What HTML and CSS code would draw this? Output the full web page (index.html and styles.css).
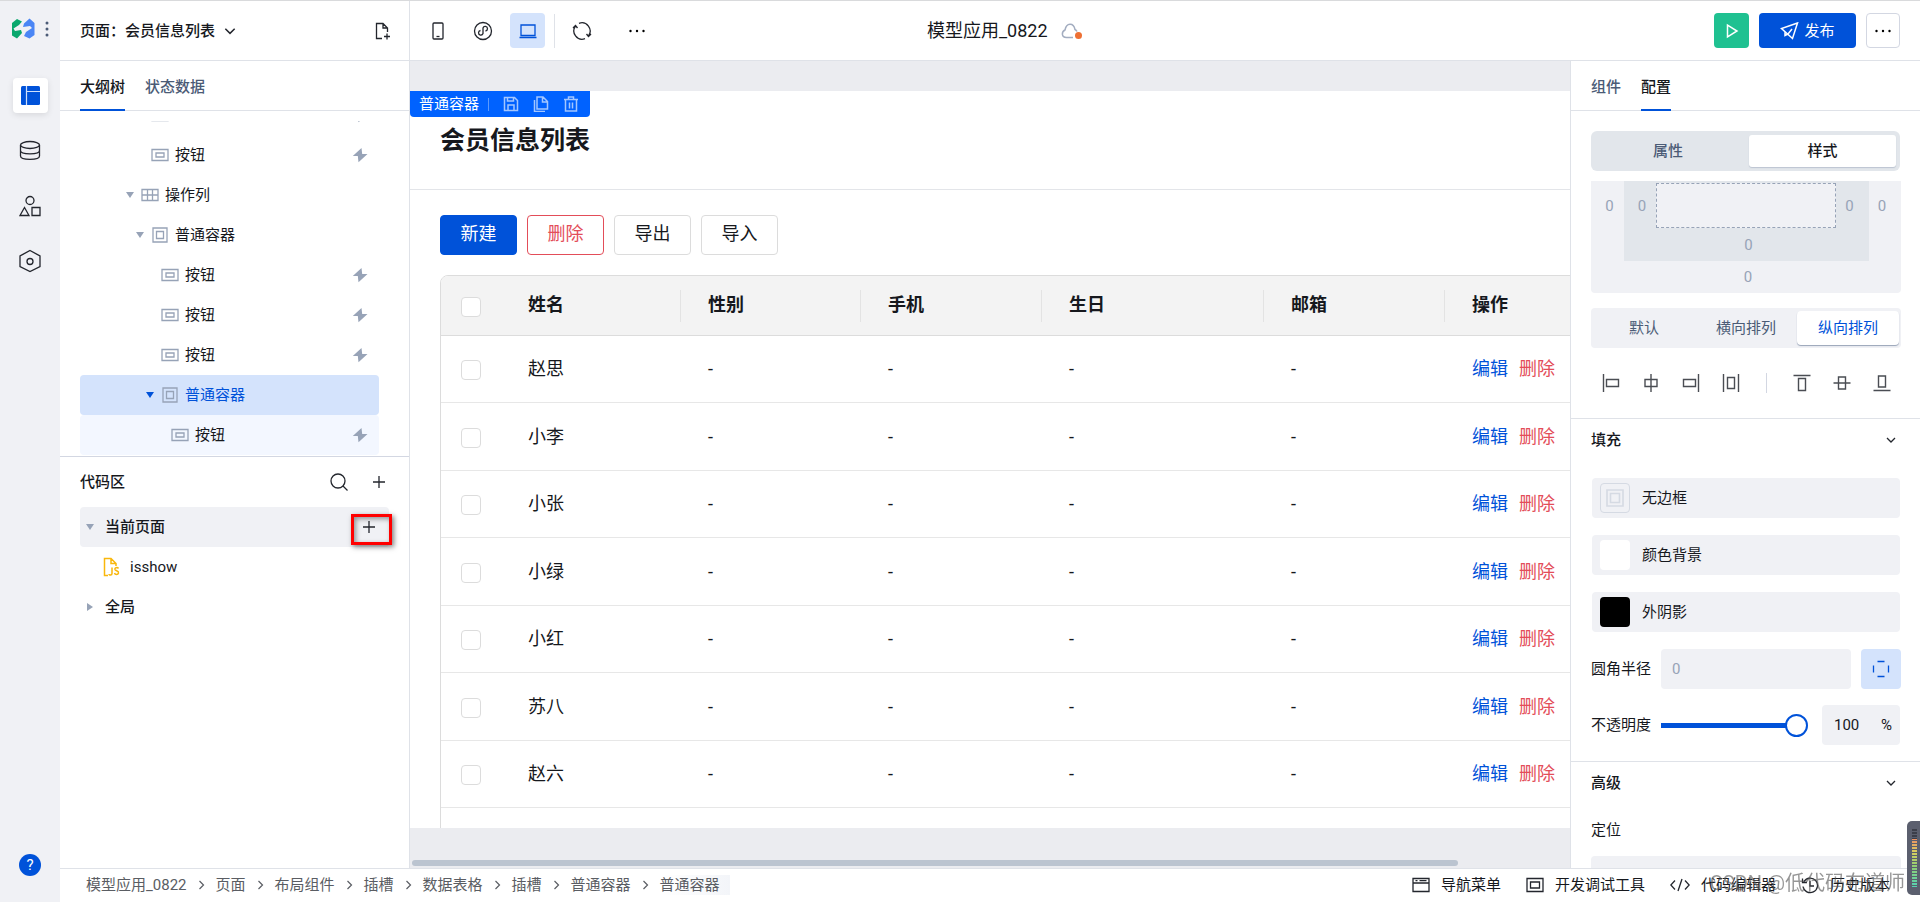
FILE: index.html
```html
<!DOCTYPE html>
<html lang="zh-CN">
<head>
<meta charset="utf-8">
<title>模型应用_0822</title>
<link rel="stylesheet" href="styles.css">
</head>
<body>
<svg class="defs" aria-hidden="true">
  <symbol id="i-btn" viewBox="0 0 18 14"><path d="M1 1.5h16v11H1z M5 5h8v4H5z"/></symbol>
  <symbol id="i-col" viewBox="0 0 18 14"><path d="M1 1.5h16v11H1z M1 7h16 M6.5 1.5v11 M11.5 1.5v11"/></symbol>
  <symbol id="i-box" viewBox="0 0 18 18"><path d="M2 2h14v14H2z M5.5 5.500h7v7h-7z"/></symbol>
  <symbol id="i-bolt" viewBox="0 0 16 16"><path d="M9.500 1 .8 9h5L6.500 15.300l9-8.300h-5.300z"/></symbol>
  <symbol id="i-chev" viewBox="0 0 12 12"><path d="M2 4l4 4 4-4"/></symbol>
  <symbol id="i-next" viewBox="0 0 8 12"><path d="M2 2l4 4-4 4"/></symbol>
  <symbol id="i-plus" viewBox="0 0 14 14"><path d="M7 1v12M1 7h12"/></symbol>
  <symbol id="i-dots" viewBox="0 0 18 18"><circle cx="2.500" cy="9" r="1.200"/><circle cx="9" cy="9" r="1.200"/><circle cx="15.500" cy="9" r="1.200"/></symbol>
</svg>
<div class="app">
  <nav class="rail">
    <div class="brand">
      <svg width="24" height="22" viewBox="0 0 24 22"><path fill="#0aa86e" d="M1 5 6 1l5 2.500L8 7l-5.500 3.500 1.500 2.500 6-1 1 3-5 5.500-5-3z"/><path fill="#4b86f5" d="M13 5.500 18.500.5l5 4.500v12l-5 3.500-5.500-2.500 2-4 6-4-2-2-7 1z"/></svg>
      <svg class="grip" width="4" height="16" viewBox="0 0 4 16"><circle cx="2" cy="2" r="1.500"/><circle cx="2" cy="8" r="1.500"/><circle cx="2" cy="14" r="1.500"/></svg>
    </div>
    <button class="rail-btn active" aria-label="页面"><svg width="19" height="19" viewBox="0 0 19 19"><rect width="19" height="19" rx="1.500" fill="#0052d9"/><path d="M5.500 0v19M5.500 5.500H19" stroke="#cfe0fb" stroke-width="1.200"/></svg></button>
    <button class="rail-btn" aria-label="数据"><svg class="line" width="22" height="22" viewBox="0 0 22 22"><ellipse cx="11" cy="5" rx="9.500" ry="3.500"/><path d="M1.500 5v11c0 4.600 19 4.600 19 0V5M1.500 10.500c0 4.600 19 4.600 19 0"/></svg></button>
    <button class="rail-btn" aria-label="组件"><svg class="line" width="22" height="22" viewBox="0 0 22 22"><circle cx="11" cy="5.500" r="4"/><path d="M5.500 12.500 10 20.500H1z M13 12.500h8v8h-8z"/></svg></button>
    <button class="rail-btn" aria-label="设置"><svg class="line" width="22" height="24" viewBox="0 0 22 24"><path d="M11 1.500 21 7v10.500L11 22.500 1 17.500V7z"/><circle cx="11" cy="12.500" r="3"/></svg></button>
    <button class="help" aria-label="帮助">?</button>
  </nav>
  <div class="workspace">
    <div class="upper">
      <aside class="left">
        <header class="page-head">
          <button class="page-pick">页面：会员信息列表<svg class="line" width="14" height="14"><use href="#i-chev"/></svg></button>
          <button class="ghost" aria-label="新建页面"><svg class="line" width="18" height="18" viewBox="0 0 18 18"><path d="M8 16.500H2.500v-15H9l4.500 4.500V10M9 1.500V6h4.500M13 11.500v6M10 14.500h6"/></svg></button>
        </header>
        <div class="tabs"><button class="tab on">大纲树</button><button class="tab">状态数据</button></div>
        <div class="tree">
          <div class="node l2"><i class="tri none"></i><svg class="mark" width="18" height="14"><use href="#i-btn"/></svg><svg class="bolt" width="16" height="16"><use href="#i-bolt"/></svg></div>
          <div class="node l2"><i class="tri none"></i><svg class="mark" width="18" height="14"><use href="#i-btn"/></svg><span>按钮</span><svg class="bolt" width="16" height="16"><use href="#i-bolt"/></svg></div>
          <div class="node l1"><i class="tri"></i><svg class="mark" width="18" height="14"><use href="#i-col"/></svg><span>操作列</span></div>
          <div class="node l2"><i class="tri"></i><svg class="mark" width="18" height="18"><use href="#i-box"/></svg><span>普通容器</span></div>
          <div class="node l3"><i class="tri none"></i><svg class="mark" width="18" height="14"><use href="#i-btn"/></svg><span>按钮</span><svg class="bolt" width="16" height="16"><use href="#i-bolt"/></svg></div>
          <div class="node l3"><i class="tri none"></i><svg class="mark" width="18" height="14"><use href="#i-btn"/></svg><span>按钮</span><svg class="bolt" width="16" height="16"><use href="#i-bolt"/></svg></div>
          <div class="node l3"><i class="tri none"></i><svg class="mark" width="18" height="14"><use href="#i-btn"/></svg><span>按钮</span><svg class="bolt" width="16" height="16"><use href="#i-bolt"/></svg></div>
          <div class="node l3 selected"><i class="tri"></i><svg class="mark" width="18" height="18"><use href="#i-box"/></svg><span>普通容器</span></div>
          <div class="node l4 child"><i class="tri none"></i><svg class="mark" width="18" height="14"><use href="#i-btn"/></svg><span>按钮</span><svg class="bolt" width="16" height="16"><use href="#i-bolt"/></svg></div>
        </div>
        <section class="code">
          <div class="code-head"><h2>代码区</h2>
            <button class="ghost" aria-label="搜索"><svg class="line" width="18" height="18" viewBox="0 0 18 18"><circle cx="8" cy="8" r="7"/><path d="M13 13 17.500 17.500"/></svg></button>
            <button class="ghost" aria-label="新增"><svg class="line" width="14" height="14"><use href="#i-plus"/></svg></button>
          </div>
          <div class="code-row current"><i class="tri"></i><b>当前页面</b><button class="add" aria-label="新增代码"><svg class="line" width="14" height="14"><use href="#i-plus"/></svg></button></div>
          <div class="code-row file"><svg width="17" height="20" viewBox="0 0 17 20" fill="none" stroke="#f9b70c" stroke-width="1.500"><path d="M5 18.500H1.500v-17H8l5 5V9M8 1.500V6.500h5M9 10.500v6c0 2-3 2-3 .5M15.500 11.500c-1-1.500-4-1-3.500 1 .5 1.500 4 1 3.500 3.500-.5 2-3.500 2-4 0"/></svg><span>isshow</span></div>
          <div class="code-row"><i class="tri shut"></i><b>全局</b></div>
        </section>
      </aside>
      <div class="main">
        <header class="top">
          <div class="tools">
            <button class="tool" aria-label="手机"><svg class="line" width="18" height="20" viewBox="0 0 18 20"><rect x="4" y="2" width="10" height="16" rx="1"/><path d="M7.500 15.500h3"/></svg></button>
            <button class="tool" aria-label="小程序"><svg class="line" width="20" height="20" viewBox="0 0 20 20"><circle cx="10" cy="10" r="8.500"/><path d="M7.500 9.500a2.300 2.300 0 1 0 2.500 3V7a2.300 2.300 0 1 1 2.500 3"/></svg></button>
            <button class="tool on" aria-label="电脑"><svg class="line" width="18" height="18" viewBox="0 0 18 18"><path d="M2 3h14v10.500H2zM.5 15.500h17"/></svg></button>
            <i class="bar"></i>
            <button class="tool" aria-label="刷新"><svg class="line" width="20" height="20" viewBox="0 0 20 20"><path d="M7 2.300A8.300 8.300 0 0 1 16.500 15M13 17.700A8.300 8.300 0 0 1 3.500 5M1 7l2.500-2.500L5.500 7M14.500 13l2 2.500 2.500-2.500"/></svg></button>
            <button class="tool more" aria-label="更多"><svg width="18" height="18"><use href="#i-dots"/></svg></button>
          </div>
          <h1>模型应用_0822<svg width="22" height="18" viewBox="0 0 22 18"><path fill="none" stroke="#a3adc0" stroke-width="1.500" d="M12 15.500H5.500c-5.500 0-5-6 -1.500-7.500C5.500.5 12.500.5 14 7.500c1 .5 1.500 1 2 2"/><circle cx="17.500" cy="13.500" r="3.500" fill="#ee7033"/></svg></h1>
          <div class="acts">
            <button class="run" aria-label="预览"><svg width="14" height="16" viewBox="0 0 14 16" fill="none" stroke="#fff" stroke-width="1.500"><path d="M2.500 2v12L12 8z"/></svg></button>
            <button class="publish"><svg width="19" height="18" viewBox="0 0 19 18" fill="none" stroke="#fff" stroke-width="1.500"><path d="M17.500 1 1.500 6.500 12.500 16.500zM5 9.500v4l3-1.500M8 12l4-5"/></svg>发布</button>
            <button class="etc" aria-label="更多操作"><svg width="18" height="18"><use href="#i-dots"/></svg></button>
          </div>
        </header>
        <div class="body">
          <main class="stage">
            <div class="sheet">
              <div class="tag"><span>普通容器</span><i></i>
                <button aria-label="保存"><svg width="16" height="16" viewBox="0 0 16 16"><path d="M1.500 1.500h10l3 3v10h-13zM4.500 1.500V5h6V1.500M5 14V9h6v5"/></svg></button>
                <button aria-label="复制"><svg width="16" height="16" viewBox="0 0 16 16"><path d="M4 1h6l4.500 4.500V13H4zM9.500 1v5h5M1.500 4v11.500H12"/></svg></button>
                <button aria-label="删除容器"><svg width="16" height="16" viewBox="0 0 16 16"><path d="M1 3.500h14M5.500 3V1h5v2M2.500 3.500v11.500h11V3.500M6.500 6.500v6M9.500 6.500v6"/></svg></button>
              </div>
              <h2 class="title">会员信息列表</h2>
              <div class="content">
                <div class="btns"><button class="primary">新建</button><button class="danger">删除</button><button>导出</button><button>导入</button></div>
                <table>
                  <colgroup><col class="c0"><col class="c1"><col class="c2"><col class="c3"><col class="c4"><col class="c5"><col class="c6"></colgroup>
                  <thead><tr><th><input type="checkbox" aria-label="全选"></th><th>姓名</th><th>性别</th><th>手机</th><th>生日</th><th>邮箱</th><th>操作</th></tr></thead>
                  <tbody>
                    <tr><td><input type="checkbox" aria-label="赵思"></td><td>赵思</td><td>-</td><td>-</td><td>-</td><td>-</td><td><a href="#">编辑</a><a href="#" class="del">删除</a></td></tr>
                    <tr><td><input type="checkbox" aria-label="小李"></td><td>小李</td><td>-</td><td>-</td><td>-</td><td>-</td><td><a href="#">编辑</a><a href="#" class="del">删除</a></td></tr>
                    <tr><td><input type="checkbox" aria-label="小张"></td><td>小张</td><td>-</td><td>-</td><td>-</td><td>-</td><td><a href="#">编辑</a><a href="#" class="del">删除</a></td></tr>
                    <tr><td><input type="checkbox" aria-label="小绿"></td><td>小绿</td><td>-</td><td>-</td><td>-</td><td>-</td><td><a href="#">编辑</a><a href="#" class="del">删除</a></td></tr>
                    <tr><td><input type="checkbox" aria-label="小红"></td><td>小红</td><td>-</td><td>-</td><td>-</td><td>-</td><td><a href="#">编辑</a><a href="#" class="del">删除</a></td></tr>
                    <tr><td><input type="checkbox" aria-label="苏八"></td><td>苏八</td><td>-</td><td>-</td><td>-</td><td>-</td><td><a href="#">编辑</a><a href="#" class="del">删除</a></td></tr>
                    <tr><td><input type="checkbox" aria-label="赵六"></td><td>赵六</td><td>-</td><td>-</td><td>-</td><td>-</td><td><a href="#">编辑</a><a href="#" class="del">删除</a></td></tr>
                    <tr class="rest"><td></td><td></td><td></td><td></td><td></td><td></td><td></td></tr>
                  </tbody>
                </table>
              </div>
            </div>
            <div class="scroll"><i></i></div>
          </main>
          <aside class="right">
            <div class="tabs"><button class="tab">组件</button><button class="tab on">配置</button></div>
            <div class="seg"><button>属性</button><button class="on">样式</button></div>
            <div class="props">
              <div class="margin">
                <input aria-label="左外边距" placeholder="0">
                <div class="padding"><input aria-label="左内边距" placeholder="0"><div class="inner"></div><input class="end" aria-label="右内边距" placeholder="0"><input class="under" aria-label="下内边距" placeholder="0"></div>
                <input class="end" aria-label="右外边距" placeholder="0">
                <input class="under" aria-label="下外边距" placeholder="0">
              </div>
              <div class="flow"><button>默认</button><button>横向排列</button><button class="on">纵向排列</button></div>
              <div class="align">
                <button aria-label="左对齐"><svg width="20" height="20" viewBox="0 0 20 20"><path d="M2.500 1v18M5.500 6.500h12v7h-12z"/></svg></button>
                <button aria-label="水平居中"><svg width="20" height="20" viewBox="0 0 20 20"><path d="M10 1v18M4 6.500h12v7H4z"/></svg></button>
                <button aria-label="右对齐"><svg width="20" height="20" viewBox="0 0 20 20"><path d="M17.500 1v18M2.500 6.500h12v7h-12z"/></svg></button>
                <button aria-label="两端对齐"><svg width="20" height="20" viewBox="0 0 20 20"><path d="M2.500 1v18M17.500 1v18M6.500 4.500h7v11h-7z"/></svg></button>
                <i></i>
                <button aria-label="顶对齐"><svg width="20" height="20" viewBox="0 0 20 20"><path d="M1.500 2.500h17M6.500 5.500h7v12h-7z"/></svg></button>
                <button aria-label="垂直居中"><svg width="20" height="20" viewBox="0 0 20 20"><path d="M1.500 10h17M6.500 4h7v12h-7z"/></svg></button>
                <button aria-label="底对齐"><svg width="20" height="20" viewBox="0 0 20 20"><path d="M1.500 17.500h17M6.500 3h7v11h-7z"/></svg></button>
              </div>
              <section class="group">
                <h3>填充<svg class="line" width="12" height="12"><use href="#i-chev"/></svg></h3>
                <div class="cards">
                  <button class="card"><i class="sw frame"><svg width="18" height="18" viewBox="0 0 18 18"><path d="M1 1h16v16H1zM4.500 4.500h9v9h-9z"/></svg></i>无边框</button>
                  <button class="card"><i class="sw"></i>颜色背景</button>
                  <button class="card"><i class="sw black"></i>外阴影</button>
                </div>
                <div class="field"><label for="radius">圆角半径</label><input id="radius" class="box" placeholder="0"><button class="corner" aria-label="四角"><svg width="18" height="18" viewBox="0 0 18 18"><path d="M5.500 1.500h7M5.500 16.500h7M1.500 5.500v7M16.500 5.500v7"/></svg></button></div>
                <div class="field"><label for="alpha">不透明度</label><input id="alpha" type="range" value="100"><div class="num"><input aria-label="不透明度数值" value="100"><span>%</span></div></div>
              </section>
              <section class="group adv">
                <h3>高级<svg class="line" width="12" height="12"><use href="#i-chev"/></svg></h3>
                <label for="pos">定位</label>
                <input id="pos" class="box">
              </section>
            </div>
          </aside>
        </div>
      </div>
    </div>
    <footer class="foot">
      <div class="crumbs"><span>模型应用_0822</span><svg width="9" height="12"><use href="#i-next"/></svg><span>页面</span><svg width="9" height="12"><use href="#i-next"/></svg><span>布局组件</span><svg width="9" height="12"><use href="#i-next"/></svg><span>插槽</span><svg width="9" height="12"><use href="#i-next"/></svg><span>数据表格</span><svg width="9" height="12"><use href="#i-next"/></svg><span>插槽</span><svg width="9" height="12"><use href="#i-next"/></svg><span>普通容器</span><svg width="9" height="12"><use href="#i-next"/></svg><span class="last">普通容器</span></div>
      <div class="links">
        <button><svg class="line" width="18" height="16" viewBox="0 0 18 16"><path d="M1 1.500h16v13H1zM1 6h16M3.500 3.700h2M7.500 3.700h7"/></svg>导航菜单</button>
        <button><svg class="line" width="18" height="16" viewBox="0 0 18 16"><path d="M1 1.500h16v13H1zM4.500 5h9v6h-9z"/></svg>开发调试工具</button>
        <button><svg class="line" width="20" height="16" viewBox="0 0 20 16"><path d="M5 3.500.8 8 5 12.500M15 3.500 19.200 8 15 12.500M12 2 8 14"/></svg>代码编辑器</button>
        <button><svg class="line" width="18" height="18" viewBox="0 0 18 18"><path d="M3 5.500a7.300 7.300 0 1 1-1 5M1.500 2.500V6.500h4.500M9 5v5h4"/></svg>历史版本</button>
      </div>
    </footer>
  </div>
  <div class="meter"><i></i></div>
  <div class="watermark">CSDN @低代码布道师</div>
</div>
</body>
</html>
```

FILE: styles.css
```css
* { box-sizing: border-box; }
body {
  margin: 0;
  font: 15px/20px Roboto, "Noto Sans CJK SC", sans-serif;
  color: #16181d;
}
button, input { font: inherit; color: inherit; margin: 0; }
button { background: none; border: 0; padding: 0; display: flex; align-items: center; justify-content: center; }
input { min-width: 0; border: 0; background: none; }
input::placeholder { color: #97a3b7; opacity: 1; }
h1, h2, h3 { margin: 0; font-weight: 500; }
.defs { position: absolute; width: 0; height: 0; }
.line { fill: none; stroke: #23262d; stroke-width: 1.3; }

.app { display: flex; height: 100vh; overflow: hidden; border-top: 1px solid #d9dadc; }

/* icon rail */
.rail { width: 60px; flex: none; background: #f0f1f5; display: flex; flex-direction: column; align-items: center; gap: 20px; padding: 17px 0 26px; }
.brand { display: flex; align-items: center; gap: 10px; align-self: flex-start; padding-left: 11px; margin-bottom: 18px; }
.grip { fill: #4b5b76; }
.rail-btn { width: 35px; height: 35px; border-radius: 4px; }
.rail-btn.active { background: #fff; box-shadow: 0 2px 6px #0000001a; }
.help { margin-top: auto; width: 22px; height: 22px; border-radius: 50%; background: #0052d9; color: #fff; }

.workspace { flex: 1; min-width: 0; display: flex; flex-direction: column; }
.upper { flex: 1; min-height: 0; display: flex; }

/* left panel */
.left { width: 350px; flex: none; border-right: 1px solid #dfe2e8; display: flex; flex-direction: column; }
.page-head { height: 60px; flex: none; border-bottom: 1px solid #dfe2e8; padding: 0 17px 0 20px; display: flex; align-items: center; justify-content: space-between; }
.page-pick { font-weight: 500; gap: 8px; }
.tabs { height: 50px; flex: none; border-bottom: 1px solid #dfe2e8; padding: 0 20px; display: flex; gap: 20px; }
.tab { color: #4b5b76; font-weight: 500; height: 50px; padding-top: 2px; border: solid transparent; border-width: 2px 0; }
.tab.on { color: #16181d; border-bottom-color: #0052d9; }
.tree { height: 335px; margin-top: 10px; padding: 0 30px 1px 20px; overflow: hidden; display: flex; flex-direction: column; justify-content: flex-end; }
.node { height: 40px; flex: none; display: flex; align-items: center; border-radius: 4px; padding-right: 11px; }
.l1 { padding-left: 46px; }
.l2 { padding-left: 56px; }
.l3 { padding-left: 66px; }
.l4 { padding-left: 76px; }
.node.selected { background: #d4e3fc; color: #0052d9; }
.node.child { background: #f3f7ff; }
.mark { fill: none; stroke: #97a3b7; stroke-width: 1.3; margin: 0 6px 0 7px; }
.bolt { fill: #97a3b7; margin-left: auto; }
.tri { width: 8px; height: 6px; background: #97a3b7; clip-path: polygon(0 0, 100% 0, 50% 100%); flex: none; }
.tri.none { background: none; }
.selected .tri { background: #0052d9; }
.tri.shut { width: 6px; height: 8px; clip-path: polygon(0 0, 100% 50%, 0 100%); margin: 0 1px; }

.code { flex: 1; border-top: 1px solid #d3d7e2; padding: 0 20px; }
.code-head { height: 50px; display: flex; align-items: center; gap: 24px; padding-right: 3px; }
.code-head h2 { font-size: 15px; margin-right: auto; }
.code-row { height: 40px; display: flex; align-items: center; gap: 11px; padding-left: 6px; border-radius: 4px; }
.code-row b { font-weight: 500; }
.code-row.current { background: #f0f1f5; }
.code-row.file { padding-left: 23px; gap: 10px; }
.add { width: 41px; height: 31px; border: 3px solid #f00; box-shadow: 2px 2px 5px #00000080, inset 2px 2px 5px #00000066; margin: 4px -3px 0 auto; padding-right: 6px; padding-bottom: 4px; }

/* top bar */
.main { flex: 1; min-width: 0; display: flex; flex-direction: column; }
.top { height: 60px; flex: none; border-bottom: 1px solid #dfe2e8; display: flex; align-items: center; padding-right: 20px; }
.tools { width: 517px; display: flex; align-items: center; padding-left: 10px; gap: 10px; }
.tool { width: 35px; height: 35px; border-radius: 4px; }
.tool.on { background: #d4e3fc; }
.tool.on .line { stroke: #0052d9; }
.tool.more { margin-left: 10px; }
.bar { width: 1px; height: 34px; background: #dfe2e8; margin: 0 -1px; }
.top h1 { font-size: 18px; font-weight: 400; display: flex; align-items: center; gap: 13px; }
.acts { margin-left: auto; display: flex; gap: 10px; }
.acts button { height: 35px; border-radius: 4px; }
.run { width: 35px; background: #1fc191; }
.publish { width: 97px; background: #0052d9; color: #fff; gap: 5px; }
.etc { width: 34px; border: 1px solid #d3d7e2; }

/* canvas */
.body { flex: 1; min-height: 0; display: flex; }
.stage { flex: 1; min-width: 0; background: #ebecf0; padding-top: 30px; display: flex; flex-direction: column; }
.sheet { flex: 1; min-height: 0; background: #fff; overflow: hidden; position: relative; }
.tag { position: absolute; left: 0; top: 0; height: 26px; background: #0062ff; color: #fff; border-radius: 0 0 4px 4px; display: flex; align-items: center; gap: 14px; padding: 0 11px 0 9px; white-space: nowrap; }
.tag i { width: 1px; height: 13px; background: #5c9bff; margin-left: -5px; }
.tag svg { fill: none; stroke: #a3c6ff; stroke-width: 1.5; }
.title { height: 99px; padding: 33px 30px 0; font-size: 25px; line-height: 34px; font-weight: 700; border-bottom: 1px solid #e3e5e9; }
.content { padding: 25px 0 0 30px; }
.btns { display: flex; gap: 10px; }
.btns button { width: 77px; height: 40px; padding-bottom: 2px; border: 1px solid #dcdcdc; border-radius: 4px; font-size: 18px; }
.btns .primary { background: #0052d9; border-color: #0052d9; color: #fff; }
.btns .danger { border-color: #e34d59; color: #e34d59; }
table { margin-top: 20px; table-layout: fixed; width: 1300px; border-collapse: separate; border-spacing: 0; border: 1px solid #dcdcdc; border-radius: 8px; overflow: hidden; font-size: 18px; }
.c0 { width: 60px; }
.c1, .c2 { width: 180px; }
.c3, .c5 { width: 181px; }
.c4 { width: 222px; }
th { height: 60px; background: #f3f3f3; border-bottom: 1px solid #dcdcdc; text-align: left; font-weight: 700; padding: 0 27px 2px; background-image: linear-gradient(#e3e3e3, #e3e3e3); background-size: 1px 32px; background-repeat: no-repeat; background-position: right center; }
th:first-child, th:last-child { background-image: none; }
td { height: 67px; border-bottom: 1px solid #e7e7e7; padding: 0 27px; }
tr:nth-child(even) td { height: 68px; }
td:first-child, th:first-child { padding: 2px 0 0 20px; line-height: 0; }
td a { color: #0052d9; text-decoration: none; margin-right: 11px; }
td a.del { color: #e34d59; }
input[type=checkbox] { appearance: none; width: 20px; height: 20px; border: 1px solid #dcdcdc; border-radius: 4px; background: #fff; }
.scroll { height: 40px; flex: none; padding: 32px 0 0 2px; }
.scroll i { display: block; width: 1046px; max-width: 100%; height: 6px; border-radius: 3px; background: #bbc4d0; }

/* right panel */
.right { width: 350px; flex: none; background: #fff; border-left: 1px solid #dfe2e8; display: flex; flex-direction: column; overflow: hidden; }
.seg { margin: 20px 20px 10px; height: 40px; flex: none; padding: 4px; background: #e2e6eb; border-radius: 6px; display: flex; font-weight: 500; color: #4b5b76; }
.seg button { flex: 1; padding-right: 8px; }
.seg .on { flex: 0 0 147px; padding: 0; background: #fff; color: #16181d; border-radius: 3px; box-shadow: 0 1px 1px #97a3b780; }
.props { flex: 1; min-height: 0; overflow: hidden; }
.margin { margin: 0 19px 0 20px; height: 112px; background: #f0f1f5; border-radius: 0 0 4px 4px; display: grid; grid-template: 80px 32px / 33px 1fr 32px; }
.margin input { text-align: center; padding: 0 0 0 4px; width: 100%; }
.margin input.end { padding: 0 6px 0 0; }
.margin > input:not(.under) { height: 50px; }
.padding { background: #e2e6eb; display: grid; grid-template: 2px 45px 33px / 32px 1fr 33px; }
.padding input, .inner { grid-row: 2; }
.padding input.under { grid-row: 3; }
.under { grid-column: 1 / -1; }
.inner { border: 1px dashed #97a3b7; background: #f0f1f5; }
.flow { margin: 15px 19px 0 20px; height: 40px; padding: 3px 2px; background: #f0f1f5; border-radius: 4px; display: grid; grid-template-columns: 1fr 1fr 102px; color: #4b5b76; }
.flow .on { background: #fff; color: #0052d9; border-radius: 4px; box-shadow: 0 1px 1px #97a3b7; }
.align { display: flex; align-items: center; gap: 20px; padding-left: 30px; height: 70px; }
.align svg { fill: none; stroke: #4a4d53; stroke-width: 1.4; }
.align i { width: 1px; height: 20px; background: #d3d7e2; margin: 0 5px; }
.group { border-top: 1px solid #dfe2e8; padding: 0 19px 0 20px; }
.group h3 { height: 42px; font-size: 15px; display: flex; align-items: center; justify-content: space-between; padding-right: 4px; }
.cards { display: grid; gap: 17px; margin-top: 17px; padding: 0 1px; }
.card { height: 40px; background: #f0f1f5; border-radius: 4px; justify-content: flex-start; gap: 12px; padding-left: 8px; }
.sw { width: 30px; height: 30px; border-radius: 4px; background: #fff; display: grid; place-items: center; }
.sw.black { background: #000; }
.sw.frame { background: none; border: 1px solid #d5dae3; }
.sw svg { fill: none; stroke: #d5dae3; stroke-width: 1.6; }
.field { display: flex; align-items: center; gap: 10px; margin-top: 17px; }
.field label { flex: none; }
.box, .num { height: 40px; background: #f0f1f5; border-radius: 4px; padding: 0 11px; }
.field > .box { flex: 1; }
.corner { width: 40px; height: 40px; border-radius: 4px; background: #d4e3fc; }
.corner svg { fill: none; stroke: #0052d9; stroke-width: 1.3; }
input[type=range] { appearance: none; flex: 1; height: 23px; background: linear-gradient(#0052d9, #0052d9) 0 9px / 90% 5px no-repeat; }
input[type=range]::-webkit-slider-thumb { appearance: none; width: 23px; height: 23px; border-radius: 50%; border: 2px solid #0052d9; background: #fff; }
.num { flex: 0 0 78px; margin-left: 4px; padding: 0 8px 0 12px; display: flex; align-items: center; }
.num input { flex: 1; width: 30px; padding: 0; }
.field:last-child { padding-right: 1px; margin-top: 16px; }
.group.adv { margin-top: 16px; }
.adv label { display: block; margin: 16px 0; }
.adv .box { width: 100%; }

/* footer */
.foot { height: 34px; flex: none; background: #fff; border-top: 1px solid #dfe2e8; display: flex; align-items: center; justify-content: space-between; padding: 0 30px 2px 26px; }
.crumbs { display: flex; align-items: center; gap: 10px; color: #5a5d63; }
.crumbs svg { fill: none; stroke: #5a5d63; stroke-width: 1.2; }
.crumbs .last { background: linear-gradient(90deg, transparent, #f3f5f9); padding-right: 10px; }
.links { display: flex; gap: 25px; }
.links button { gap: 11px; }

/* overlays */
.meter { position: fixed; right: 0; bottom: 7px; width: 13px; height: 74px; padding: 8px 3px 8px 5px; background: #5b5f6e; border-radius: 5px 0 0 5px; }
.meter i { display: block; height: 100%; background: repeating-linear-gradient(transparent 0 2px, #5b5f6e 2px 3px), linear-gradient(#3b3e49 0 17%, #ec9263 18%, #d8cf5f 40%, #8fcf74 65%, #55d3b2); }
.watermark { position: fixed; right: 15px; bottom: 6px; font-size: 20px; line-height: 26px; color: #50505099; pointer-events: none; }
```
